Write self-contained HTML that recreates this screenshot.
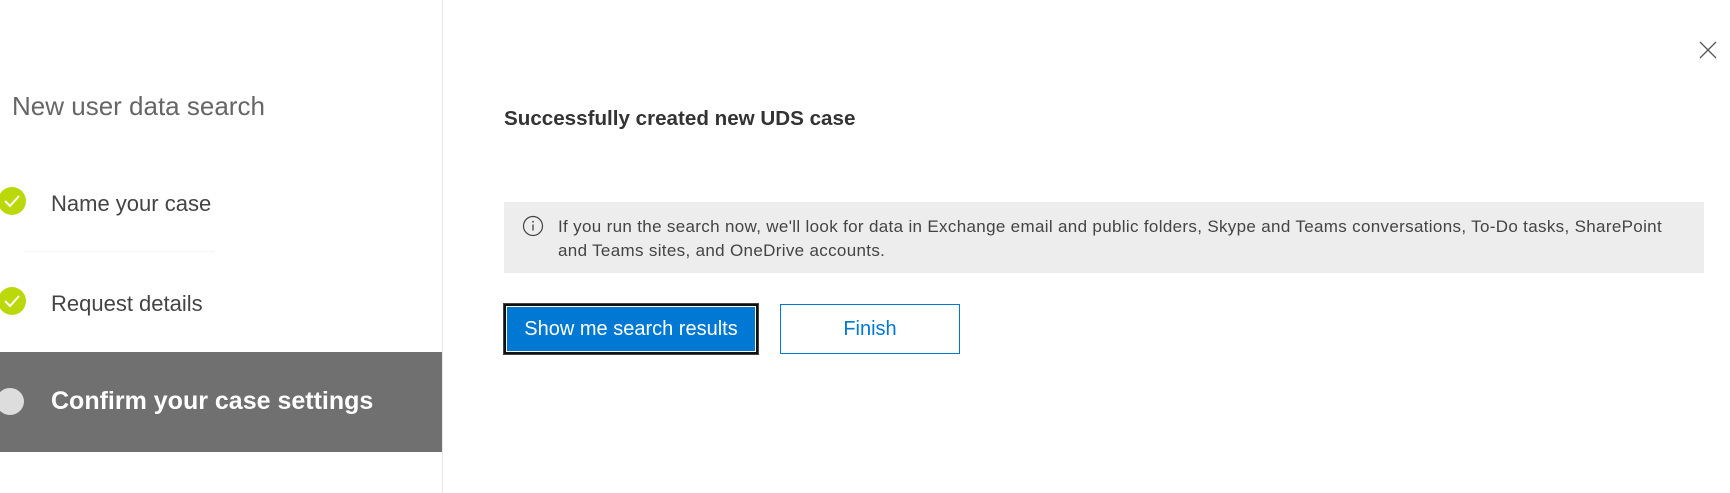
<!DOCTYPE html>
<html><head><meta charset="utf-8"><style>
*{margin:0;padding:0;box-sizing:border-box}
body{width:1730px;height:493px;background:#fff;font-family:"Liberation Sans",sans-serif;position:relative;overflow:hidden}
.abs{position:absolute;white-space:nowrap}
.div{position:absolute;left:442px;top:0;width:1px;height:493px;background:#e6e6e6}
.title{left:12px;top:91px;font-size:26px;color:#666;}
.step{font-size:22px;color:#444;left:51px}
.chk{position:absolute;left:-2px;width:28px;height:28px;border-radius:50%;background:#bad80a}
.band{position:absolute;left:0;top:352px;width:442px;height:100px;background:#707070}
.h{left:504px;top:107px;font-size:20.6px;font-weight:bold;color:#333}
.info{position:absolute;left:504px;top:202px;width:1200px;height:71px;background:#ededed}
.itext{left:558px;top:215px;font-size:17px;letter-spacing:0.33px;line-height:24px;color:#444}
.b1{position:absolute;left:504px;top:304px;width:254px;height:50px;background:#0078d4;border:2px solid #111;outline:1px solid #444;box-shadow:inset 0 0 0 1px #fff;color:#fff;font-size:20px;text-align:center;line-height:46px}
.b2{position:absolute;left:780px;top:304px;width:180px;height:50px;border:1px solid #0078d4;color:#0078d4;font-size:20px;text-align:center;line-height:48px}
</style></head><body>
<div class="div"></div>
<div class="abs title">New user data search</div>
<div class="chk" style="top:187px"><svg width="28" height="28"><path d="M7 14l5 5 9-10" stroke="#fff" stroke-width="2" fill="none"/></svg></div>
<div class="abs step" style="top:191px">Name your case</div>
<div style="position:absolute;left:24px;top:251px;width:190px;height:1px;background:#f4f4f4"></div>
<div class="chk" style="top:287px"><svg width="28" height="28"><path d="M7 14l5 5 9-10" stroke="#fff" stroke-width="2" fill="none"/></svg></div>
<div class="abs step" style="top:291px">Request details</div>
<div class="band"></div>
<div style="position:absolute;left:-4px;top:388px;width:28px;height:27px;border-radius:50%;background:#ddd"></div>
<div class="abs" style="left:51px;top:387px;font-size:25px;font-weight:bold;color:#fff">Confirm your case settings</div>
<svg class="abs" style="left:1698px;top:40px" width="20" height="20"><path d="M2 2L18 18M18 2L2 18" stroke="#555" stroke-width="1.3"/></svg>
<div class="abs h">Successfully created new UDS case</div>
<div class="info"></div>
<svg class="abs" style="left:522px;top:215px" width="22" height="22"><circle cx="11" cy="11" r="9.5" stroke="#444" stroke-width="1.2" fill="none"/><path d="M11 9.5v6" stroke="#444" stroke-width="1.3"/><circle cx="11" cy="6.8" r="0.9" fill="#444"/></svg>
<div class="abs itext">If you run the search now, we'll look for data in Exchange email and public folders, Skype and Teams conversations, To-Do tasks, SharePoint<br>and Teams sites, and OneDrive accounts.</div>
<div class="b1">Show me search results</div>
<div class="b2">Finish</div>
</body></html>
